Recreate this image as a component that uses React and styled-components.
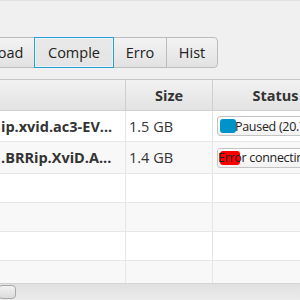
import React from "react";
import styled, { createGlobalStyle } from "styled-components";

const Global = createGlobalStyle`
  html, body { margin: 0; padding: 0; background: #f0f0f0; }
  body { font-family: "Open Sans", "Noto Sans", sans-serif; width: 300px; height: 300px; overflow: hidden; }
  #root { width: 300px; height: 300px; overflow: hidden; }
`;

const Window = styled.div`
  width: 300px;
  height: 300px;
  display: flex;
  flex-direction: column;
  border-top: 1px solid #e2e2e2;
  box-sizing: border-box;
  overflow: hidden;
`;

const Toolbar = styled.div`
  height: 79px;
  flex-shrink: 0;
  display: flex;
  align-items: flex-end;
  padding-bottom: 11px;
  box-sizing: border-box;
  border-bottom: 1px solid #c6c6c6;
`;

const Segmented = styled.div`
  display: flex;
  margin-left: -57px;
`;

const SegButton = styled.div`
  height: 31px;
  box-sizing: border-box;
  width: ${(p) => p.$w}px;
  flex-shrink: 0;
  overflow: hidden;
  white-space: nowrap;
  display: flex;
  align-items: center;
  justify-content: center;
  font-size: 14.5px;
  color: #222;
  border: 1px solid ${(p) => (p.$selected ? "#2a9fd6" : "#bcbcbc")};
  margin-left: ${(p) => (p.$first ? "0" : "-1px")};
  position: relative;
  z-index: ${(p) => (p.$selected ? 1 : 0)};
  border-radius: ${(p) => (p.$last ? "0 4px 4px 0" : "0")};
  background: ${(p) =>
    p.$selected
      ? "linear-gradient(#e8e8e8, #e4e4e4)"
      : "linear-gradient(#f3f3f3, #e2e2e2)"};
  box-shadow: ${(p) => (p.$selected ? "inset 0 0 0 1px #e8f4fa" : "none")};
`;

const Table = styled.div`
  flex: 1;
  display: flex;
  flex-direction: column;
  background: #fff;
  overflow: hidden;
`;

const Grid = styled.div`
  display: grid;
  grid-template-columns: 126px 87px 126px;
  width: 339px;
`;

const HeaderCell = styled.div`
  height: 31px;
  box-sizing: border-box;
  display: flex;
  align-items: center;
  justify-content: center;
  font-weight: 700;
  font-size: 14.5px;
  color: #333;
  background: linear-gradient(#f2f2f2, #e3e3e3);
  border-right: 1px solid #cfcfcf;
  border-bottom: 1px solid #cfcfcf;
`;

const Cell = styled.div`
  height: ${(p) => p.$h}px;
  box-sizing: border-box;
  display: flex;
  align-items: center;
  white-space: nowrap;
  overflow: hidden;
  font-size: 14.5px;
  color: #333;
  font-weight: ${(p) => (p.$bold ? 700 : 400)};
  padding-left: ${(p) => p.$pl || 0}px;
  background: ${(p) => (p.$odd ? "#f8f8f8" : "#ffffff")};
  border-right: 1px solid #e6e6e6;
  border-bottom: 1px solid #e6e6e6;
`;

const Progress = styled.div`
  position: relative;
  width: 150px;
  flex-shrink: 0;
  height: 20px;
  box-sizing: border-box;
  border: 1px solid #c4c4c4;
  border-radius: 3px;
  background: linear-gradient(#ffffff, #f2f2f2);
  margin-left: 4px;
  display: flex;
  align-items: center;
`;

const Fill = styled.div`
  position: absolute;
  left: 2px;
  top: 2px;
  bottom: 2px;
  width: ${(p) => p.$w}px;
  border-radius: 3px;
  background: ${(p) => p.$color};
`;

const ProgressText = styled.span`
  position: relative;
  font-size: 12.5px;
  letter-spacing: -0.3px;
  color: #222;
  padding-left: ${(p) => p.$pl}px;
  white-space: nowrap;
`;

const Scrollbar = styled.div`
  height: 17px;
  flex-shrink: 0;
  background: linear-gradient(#e0e0e0, #ebebeb);
  border-top: 1px solid #d4d4d4;
  box-sizing: border-box;
  display: flex;
  align-items: center;
`;

const Thumb = styled.div`
  width: 18px;
  height: 14px;
  margin-left: -2px;
  box-sizing: border-box;
  border: 1px solid #a9a9a9;
  border-radius: 4px;
  background: linear-gradient(#f2f2f2, #dcdcdc);
`;

const rows = [
  { name: "ip.xvid.ac3-EV...", size: "1.5 GB", status: "Paused (20.7%)", color: "#0093c9", fw: 16, tp: 17, h: 31 },
  { name: ".BRRip.XviD.A...", size: "1.4 GB", status: "Error connecting", color: "#ff0000", fw: 20, tp: 0, h: 32 },
];

const empties = [29, 29, 29, 29];

export default function App() {
  return (
    <>
      <Global />
      <Window>
        <Toolbar>
          <Segmented>
            <SegButton $w={92} $first>Download</SegButton>
            <SegButton $w={80} $selected>Comple</SegButton>
            <SegButton $w={54}>Erro</SegButton>
            <SegButton $w={52} $last>Hist</SegButton>
          </Segmented>
        </Toolbar>
        <Table>
          <Grid>
            <HeaderCell />
            <HeaderCell>Size</HeaderCell>
            <HeaderCell>Status</HeaderCell>
            {rows.map((r, i) => (
              <React.Fragment key={i}>
                <Cell $h={r.h} $bold $odd={i % 2 === 1} $pl={1}>{r.name}</Cell>
                <Cell $h={r.h} $odd={i % 2 === 1} $pl={3}>{r.size}</Cell>
                <Cell $h={r.h} $odd={i % 2 === 1}>
                  <Progress>
                    <Fill $w={r.fw} $color={r.color} />
                    <ProgressText $pl={r.tp}>{r.status}</ProgressText>
                  </Progress>
                </Cell>
              </React.Fragment>
            ))}
            {empties.map((h, i) => (
              <React.Fragment key={"e" + i}>
                <Cell $h={h} $odd={i % 2 === 1} />
                <Cell $h={h} $odd={i % 2 === 1} />
                <Cell $h={h} $odd={i % 2 === 1} />
              </React.Fragment>
            ))}
          </Grid>
        </Table>
        <Scrollbar>
          <Thumb />
        </Scrollbar>
      </Window>
    </>
  );
}
